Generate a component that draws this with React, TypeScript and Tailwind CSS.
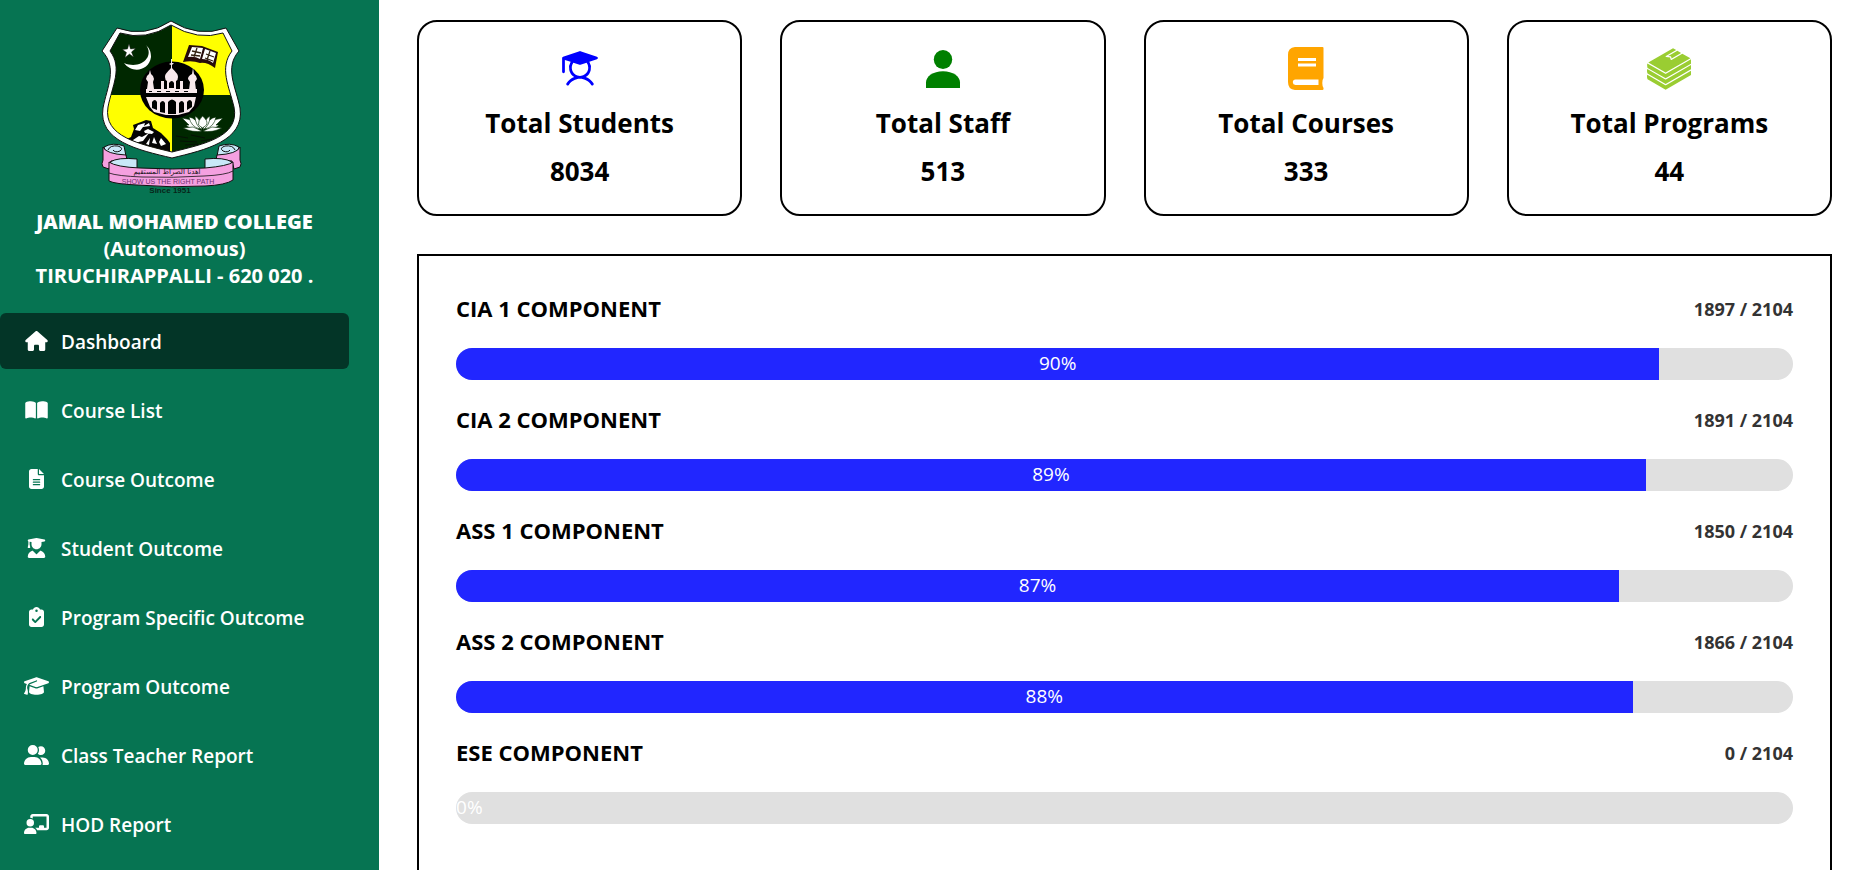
import React from "react";
import type { ComponentType } from "react";
import {
  FaBookOpen,
  FaChalkboardUser,
  FaClipboardCheck,
  FaFileLines,
  FaGraduationCap,
  FaHouse,
  FaUserGraduate,
  FaUserGroup,
} from "react-icons/fa6";
import { PiStudentFill } from "react-icons/pi";
import { SiBookstack } from "react-icons/si";

type IconType = ComponentType<{ className?: string }>;

function StaffIcon({ className }: { className?: string }) {
  return (
    <svg viewBox="0 0 44 44" fill="currentColor" className={className} aria-hidden="true">
      <ellipse cx="22" cy="12.500" rx="9.200" ry="9.600" />
      <path d="M5 41v-5.500C5 29.500 12 24.300 22 24.300S39 29.500 39 35.500V41z" />
    </svg>
  );
}

function CourseIcon({ className }: { className?: string }) {
  return (
    <svg viewBox="0 0 44 44" fill="currentColor" className={className} aria-hidden="true">
      <path
        fillRule="evenodd"
        d="M11 0H38.500Q39.500 0 39.500 1V31Q38.300 32.500 38.300 36T39.500 41V42Q39.500 43 38.500 43H11Q4 42.500 4 35V8Q4 .5 11 0zM14 11v3h18v-3zM14 16.500v3h18v-3zM11.500 32.500q-2.700.3-2.700 2.700t2.700 2.800H34.500v-5.500z"
      />
    </svg>
  );
}

const navItems: { label: string; icon: IconType; active?: boolean }[] = [
  { label: "Dashboard", icon: FaHouse, active: true },
  { label: "Course List", icon: FaBookOpen },
  { label: "Course Outcome", icon: FaFileLines },
  { label: "Student Outcome", icon: FaUserGraduate },
  { label: "Program Specific Outcome", icon: FaClipboardCheck },
  { label: "Program Outcome", icon: FaGraduationCap },
  { label: "Class Teacher Report", icon: FaUserGroup },
  { label: "HOD Report", icon: FaChalkboardUser },
];

const stats: { label: string; value: number; icon: IconType; tone: string }[] = [
  { label: "Total Students", value: 8034, icon: PiStudentFill, tone: "text-[#0000ff]" },
  { label: "Total Staff", value: 513, icon: StaffIcon, tone: "text-[#008000]" },
  { label: "Total Courses", value: 333, icon: CourseIcon, tone: "text-[#ffa500]" },
  { label: "Total Programs", value: 44, icon: SiBookstack, tone: "text-[#9acd32]" },
];

const components = [
  { label: "CIA 1 COMPONENT", done: 1897, total: 2104, percent: 90 },
  { label: "CIA 2 COMPONENT", done: 1891, total: 2104, percent: 89 },
  { label: "ASS 1 COMPONENT", done: 1850, total: 2104, percent: 87 },
  { label: "ASS 2 COMPONENT", done: 1866, total: 2104, percent: 88 },
  { label: "ESE COMPONENT", done: 0, total: 2104, percent: 0 },
];

function Crest() {
  return (
    <svg viewBox="0 0 180 190" className="h-[190px] w-[180px]" role="img" aria-label="Jamal Mohamed College crest">
      <defs>
        <clipPath id="field">
          <path d="M40 23 Q66 31 91 15 Q118 31 143 23 L152 41 C139 58 149 76 154 97 C160 127 124 134 92 142 C60 134 23 127 28 97 C32 76 43 58 30 41 Z" />
        </clipPath>
      </defs>
      <path d="M37 18 Q65 28 91 11 Q118 28 146 18 L159 41 C144 58 156 77 160 98 C165 131 125 140 92 148 C58 140 18 131 23 98 C27 77 38 58 22 41 Z" fill="#fff" stroke="#111" />
      <g clipPath="url(#field)">
        <path d="M20 8h72v77H20z" fill="#002800" />
        <path d="M92 8h72v77H92z" fill="#ff0" />
        <path d="M20 85h72v65H20z" fill="#ff0" />
        <path d="M92 85h72v65H92z" fill="#002800" />
        <path d="M47 129l4-2 3-8-1-4 8-3 5-2 5 1 2 7 8 5 6 6 3 4v14z" fill="#050505" />
        <path d="M55 120l3-5 7-2-1 3 5-3 1 3-7 1-3 4zM64 121l4-2 6 3-2 2-7-1zM53 130l6-4 3 1 7-4-6 8-9 2zM66 134l4-6-1 7zM72 133l2-6 3 7zM79 132l2-4 5 6-5 2z" fill="#fff" />
        <path d="M96 126l12 2M111 125l14 3M100 131l17 1M121 131l12-2M105 135l13-1" stroke="#061006" />
      </g>
      <path d="M40 23 Q66 31 91 15 Q118 31 143 23 L152 41 C139 58 149 76 154 97 C160 127 124 134 92 142 C60 134 23 127 28 97 C32 76 43 58 30 41 Z" fill="none" stroke="#111" />
      <path d="M66 35 C75 47 60 60 44 53 C52 64 69 61 71 47 C71 41 69 38 66 35Z" fill="#fff" />
      <path d="M49 34l1.500 5 5-.5-4 3.500 2 5-4-3-4.500 3.500 1.500-5-4-3 5-.5z" fill="#fff" stroke="#111" strokeWidth=".4" />
      <path d="M109 35l13 1 16 6-3 16q-8-6-15-5-8-3-17-1z" fill="#260b0b" />
      <path d="M112 37l11 1-3 11q-5-3-12-2zM125 39l11 4-3 10q-5-4-11-4z" fill="#fff" />
      <path d="M112 41l9 2M111 45l9 1M126 44l8 3M125 48l8 3M117 38l-3 9M130 41l-3 9" stroke="#321" strokeWidth="1.300" />
      <ellipse cx="92" cy="80" rx="32" ry="28.500" fill="#000" />
      <g fill="#f8e8ec">
        <path d="M91 49h1v4h2l-2 2v3c2 3 6 5 6 9q0 3-2 4v8H87v-8q-2-1-2-4c0-4 4-6 6-9v-3l-2-1 2-1z" />
        <path d="M70 60l1 4q3 2 3 5l-1 3 1 7h-7l1-7-2-3q0-3 3-5zM113 58l1 6q3 2 3 5l-2 3 1 8h-7l1-8-2-3q0-3 4-5z" />
        <path d="M66 79h51v4H66zM66 87h50l-2 9-5 6-11 3H86l-12-3-4-5z" />
        <path d="M81 71h3v9h-3zM100 71h3v9h-3z" />
      </g>
      <g fill="#000">
        <path d="M72 98v-6q3-4 5 0v8zM80 102v-9q3-4 5 0v10zM88 104v-12q4-5 8 0v12zM99 103v-10q3-4 5 0v9zM107 100v-8q3-4 5 0v5z" />
        <path d="M89 73q3-4 5 0v5h-5zM69 81h3v1h-3zM77 81h4v1h-4zM86 81h4v1h-4zM95 81h4v1h-4zM104 81h4v1h-4z" />
      </g>
      <g fill="#fff" stroke="#002800" strokeWidth=".6">
        <path d="M102 108l10 2 7 9q-10 0-13-4l3 0zM143 108l-10 2-7 9q10 0 13-4l-3 0z" />
        <path d="M103 118l10-1 9 4q-9 2-19-3zM142 118l-10-1-9 4q9 2 19-3z" />
        <path d="M109 107q8 1 11 12-9-2-11-12zM136 107q-8 1-11 12 9-2 11-12z" />
        <path d="M115 106q6 3 7 14-7-5-7-14zM130 106q-6 3-7 14 7-5 7-14z" />
        <path d="M122.500 106q-5 5-4 9l4 3 4-3q2-4-4-9z" />
      </g>
      <g stroke="#111">
        <path d="M24 137q9-5 20-1l2 10-16 9z" fill="#c8e8f8" />
        <path d="M159 137q-9-5-20-1l-2 10 16 9z" fill="#c8e8f8" />
        <path d="M23 137q3 7 23 8l1 5-16 1-2 8-6-2q-2-3 0-7zM160 137q-3 7-23 8l-1 5 16 1 2 8 6-2q2-3 0-7z" fill="#f5a0e0" />
        <path d="M28 140q2-5 10-4 6 2 2 5-5 2-7-1M155 140q-2-5-10-4-6 2-2 5 5 2 7-1" fill="none" />
        <path d="M30 152q8-5 27-3v10H36zM152 152q-8-5-27-3v10h21z" fill="#c8e8f8" />
        <path d="M29 152Q36 157 60 158 92 160 125 158 148 156 153 152V170Q146 175 125 176 92 178 57 175 35 174 29 171Z" fill="#f5a0e0" />
        <path d="M29 163q8 3 33 4 32 1 62-1 22-1 29-5" fill="none" strokeWidth=".8" />
      </g>
      <text x="87" y="164" textAnchor="middle" direction="rtl" className="fill-[#111] font-['DejaVu_Sans',sans-serif] text-[7px]">
        اهدنا الصراط المستقيم
      </text>
      <text x="88" y="174" textAnchor="middle" className="fill-[#703070] font-['Liberation_Sans',sans-serif] text-[7px]">
        SHOW US THE RIGHT PATH
      </text>
      <text x="90" y="183" textAnchor="middle" className="fill-[#08251a] font-['Liberation_Sans',sans-serif] text-[8px] font-bold">
        Since 1951
      </text>
    </svg>
  );
}

function Sidebar() {
  return (
    <aside className="flex w-[379px] shrink-0 flex-col overflow-hidden bg-[#067452] pr-[30px] text-white">
      <div className="flex justify-center pt-[10px] pr-[10px]">
        <Crest />
      </div>
      <p className="mt-2 text-center text-[20px] leading-[27px] font-bold">
        <span className="font-extrabold">JAMAL MOHAMED COLLEGE</span>
        <br />
        (Autonomous)
        <br />
        TIRUCHIRAPPALLI - 620 020 .
      </p>
      <nav className="mt-6 flex flex-col gap-[13px]" aria-label="Main">
        {navItems.map(({ label, icon: Icon, active }) => (
          <a
            key={label}
            href="#"
            aria-current={active ? "page" : undefined}
            className={`flex h-14 shrink-0 items-center gap-3 rounded-md pl-6 text-[19px] font-semibold ${active ? "bg-[#033527]" : ""}`}
          >
            <Icon className="h-5 w-[25px] shrink-0" />
            <span className="pt-[3px]">{label}</span>
          </a>
        ))}
      </nav>
    </aside>
  );
}

export default function App() {
  return (
    <div className="flex h-screen bg-white font-['Open_Sans','Noto_Sans',sans-serif] text-black">
      <Sidebar />
      <main className="flex min-w-0 flex-1 flex-col gap-[38px] overflow-y-auto pt-5 pr-[23px] pl-[38px] [scrollbar-width:none]">
        <section className="grid shrink-0 grid-cols-4 gap-[38px]" aria-label="Totals">
          {stats.map(({ label, value, icon: Icon, tone }) => (
            <article
              key={label}
              className="flex h-[196px] flex-col items-center rounded-[20px] border-2 border-black pt-[25px] text-[26px] leading-[48px] font-bold"
            >
              <Icon className={`h-11 w-11 ${tone}`} />
              <h2 className="mt-2">{label}</h2>
              <p>{value}</p>
            </article>
          ))}
        </section>
        <section
          className="flex shrink-0 flex-col gap-6 border-2 border-black px-[37px] pt-[37px] pb-20"
          aria-label="Component progress"
        >
          {components.map(({ label, done, total, percent }) => (
            <div key={label}>
              <div className="flex h-8 items-start justify-between">
                <h3 className="text-[22px] leading-[30px] font-bold">{label}</h3>
                <span className="text-[18px] leading-8 font-bold text-[#333]">
                  {done} / {total}
                </span>
              </div>
              <div
                role="progressbar"
                aria-label={label}
                aria-valuenow={percent}
                aria-valuemin={0}
                aria-valuemax={100}
                className="mt-[23px] h-8 overflow-hidden rounded-full bg-[#e0e0e0]"
              >
                <div
                  className="h-full bg-[#2126ff] text-center text-[19px] leading-[30px] text-white"
                  style={{ width: `${percent}%` }}
                >
                  {percent}%
                </div>
              </div>
            </div>
          ))}
        </section>
      </main>
    </div>
  );
}
